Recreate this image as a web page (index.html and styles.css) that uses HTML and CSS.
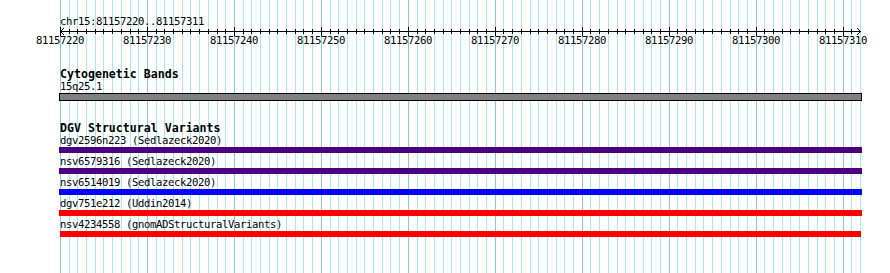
FILE: index.html
```html
<!DOCTYPE html>
<html>
<head>
<meta charset="utf-8">
<title>chr15:81157220..81157311</title>
<link rel="stylesheet" href="styles.css">
</head>
<body>
<svg class="grid" width="890" height="273" viewBox="0 0 890 273" shape-rendering="crispEdges">
  <path class="grid-minor" d="M69.5 0V273M77.5 0V273M86.5 0V273M95.5 0V273M103.5 0V273M112.5 0V273M121.5 0V273M130.5 0V273M138.5 0V273M156.5 0V273M164.5 0V273M173.5 0V273M182.5 0V273M190.5 0V273M199.5 0V273M208.5 0V273M217.5 0V273M225.5 0V273M243.5 0V273M251.5 0V273M260.5 0V273M269.5 0V273M277.5 0V273M286.5 0V273M295.5 0V273M303.5 0V273M312.5 0V273M330.5 0V273M338.5 0V273M347.5 0V273M356.5 0V273M364.5 0V273M373.5 0V273M382.5 0V273M390.5 0V273M399.5 0V273M417.5 0V273M425.5 0V273M434.5 0V273M443.5 0V273M451.5 0V273M460.5 0V273M469.5 0V273M477.5 0V273M486.5 0V273M503.5 0V273M512.5 0V273M521.5 0V273M530.5 0V273M538.5 0V273M547.5 0V273M556.5 0V273M564.5 0V273M573.5 0V273M590.5 0V273M599.5 0V273M608.5 0V273M617.5 0V273M625.5 0V273M634.5 0V273M643.5 0V273M651.5 0V273M660.5 0V273M677.5 0V273M686.5 0V273M695.5 0V273M703.5 0V273M712.5 0V273M721.5 0V273M730.5 0V273M738.5 0V273M747.5 0V273M764.5 0V273M773.5 0V273M782.5 0V273M790.5 0V273M799.5 0V273M808.5 0V273M817.5 0V273M825.5 0V273M834.5 0V273M851.5 0V273M860.5 0V273"/>
  <path class="grid-major" d="M60.5 0V273M147.5 0V273M234.5 0V273M321.5 0V273M408.5 0V273M495.5 0V273M582.5 0V273M669.5 0V273M756.5 0V273M843.5 0V273"/>
</svg>
<div class="content">
  <svg class="ruler" width="890" height="50" viewBox="0 0 890 50">
    <text class="ruler-title" x="60" y="25">chr15:81157220..81157311</text>
    <g shape-rendering="crispEdges" class="ruler-lines">
      <path d="M60 31.5H861"/>
      <path d="M69.5 29v5M77.5 29v5M86.5 29v5M95.5 29v5M103.5 29v5M112.5 29v5M121.5 29v5M130.5 29v5M138.5 29v5M156.5 29v5M164.5 29v5M173.5 29v5M182.5 29v5M190.5 29v5M199.5 29v5M208.5 29v5M217.5 29v5M225.5 29v5M243.5 29v5M251.5 29v5M260.5 29v5M269.5 29v5M277.5 29v5M286.5 29v5M295.5 29v5M303.5 29v5M312.5 29v5M330.5 29v5M338.5 29v5M347.5 29v5M356.5 29v5M364.5 29v5M373.5 29v5M382.5 29v5M390.5 29v5M399.5 29v5M417.5 29v5M425.5 29v5M434.5 29v5M443.5 29v5M451.5 29v5M460.5 29v5M469.5 29v5M477.5 29v5M486.5 29v5M503.5 29v5M512.5 29v5M521.5 29v5M530.5 29v5M538.5 29v5M547.5 29v5M556.5 29v5M564.5 29v5M573.5 29v5M590.5 29v5M599.5 29v5M608.5 29v5M617.5 29v5M625.5 29v5M634.5 29v5M643.5 29v5M651.5 29v5M660.5 29v5M677.5 29v5M686.5 29v5M695.5 29v5M703.5 29v5M712.5 29v5M721.5 29v5M730.5 29v5M738.5 29v5M747.5 29v5M764.5 29v5M773.5 29v5M782.5 29v5M790.5 29v5M799.5 29v5M808.5 29v5M817.5 29v5M825.5 29v5M834.5 29v5M851.5 29v5"/>
      <path d="M60.5 27v9M147.5 27v9M234.5 27v9M321.5 27v9M408.5 27v9M495.5 27v9M582.5 27v9M669.5 27v9M756.5 27v9M843.5 27v9"/>
    </g>
    <path class="ruler-arrow" d="M64 28L60.5 31.5L64 35M857 28L860.5 31.5L857 35"/>
    <g class="ruler-labels">
      <text x="60" y="44">81157220</text>
      <text x="147" y="44">81157230</text>
      <text x="234" y="44">81157240</text>
      <text x="321" y="44">81157250</text>
      <text x="408" y="44">81157260</text>
      <text x="495" y="44">81157270</text>
      <text x="582" y="44">81157280</text>
      <text x="669" y="44">81157290</text>
      <text x="756" y="44">81157300</text>
      <text x="843" y="44">81157310</text>
    </g>
  </svg>

  <section class="track cyto">
    <div class="title">Cytogenetic Bands</div>
    <div class="label">15q25.1</div>
    <div class="band"></div>
  </section>

  <section class="track dgv">
    <div class="title">DGV Structural Variants</div>
    <div class="label">dgv2596n223 (Sedlazeck2020)</div>
    <div class="feature indigo"></div>
    <div class="label">nsv6579316 (Sedlazeck2020)</div>
    <div class="feature indigo"></div>
    <div class="label">nsv6514019 (Sedlazeck2020)</div>
    <div class="feature blue"></div>
    <div class="label">dgv751e212 (Uddin2014)</div>
    <div class="feature red"></div>
    <div class="label">nsv4234558 (gnomADStructuralVariants)</div>
    <div class="feature red last"></div>
  </section>
</div>
</body>
</html>
```
FILE: styles.css
```css
html, body {
  margin: 0;
  padding: 0;
  background: #ffffff;
}
body {
  position: relative;
  width: 890px;
  height: 273px;
  overflow: hidden;
  font-family: "DejaVu Sans Mono", "Liberation Mono", monospace;
  color: #000000;
}
.grid {
  position: absolute;
  left: 0;
  top: 0;
  z-index: 0;
}
.grid-minor {
  stroke: #a8e8f0;
  stroke-width: 1;
  fill: none;
}
.grid-major {
  stroke: #88c6ea;
  stroke-width: 1;
  fill: none;
}
.content {
  position: relative;
  z-index: 1;
}
.ruler {
  display: block;
}
.ruler-title,
.ruler-labels text {
  font-family: "DejaVu Sans Mono", "Liberation Mono", monospace;
  font-size: 10.6px;
  letter-spacing: -0.38px;
  fill: #000000;
}
.ruler-labels text {
  text-anchor: middle;
}
.ruler-lines path {
  stroke: #000000;
  stroke-width: 1;
  fill: none;
}
.ruler-arrow {
  stroke: #000000;
  stroke-width: 1;
  fill: none;
}
.track {
  margin-left: 60px;
}
.cyto {
  margin-top: 18px;
}
.dgv {
  margin-top: 21px;
}
.title {
  font-weight: bold;
  font-size: 11.6px;
  line-height: 12px;
  height: 12px;
  white-space: nowrap;
}
.label {
  font-size: 10.6px;
  letter-spacing: -0.38px;
  line-height: 12px;
  height: 12px;
  white-space: nowrap;
}
.band {
  margin: 1px 0 0 -1px;
  width: 801px;
  height: 6px;
  border: 1px solid #000000;
  background: #808080;
}
.feature {
  margin: 1px 0 2px -1px;
  width: 803px;
  height: 6px;
}
.feature.last {
  margin-left: 0;
  width: 801px;
}
.indigo {
  background: #4b0082;
}
.blue {
  background: #0000ff;
}
.red {
  background: #ff0000;
}
```
